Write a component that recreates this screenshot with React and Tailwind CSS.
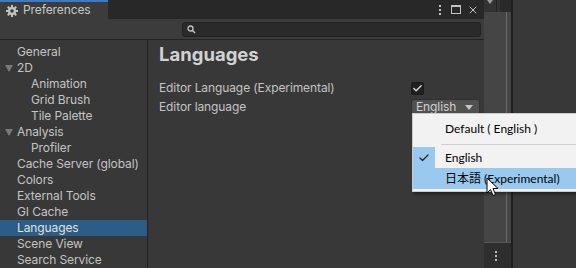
import { Check, X } from 'lucide-react'

const items = [
  { label: 'General', level: 0 },
  { label: '2D', level: 0, open: true },
  { label: 'Animation', level: 1 },
  { label: 'Grid Brush', level: 1 },
  { label: 'Tile Palette', level: 1 },
  { label: 'Analysis', level: 0, open: true },
  { label: 'Profiler', level: 1 },
  { label: 'Cache Server (global)', level: 0 },
  { label: 'Colors', level: 0 },
  { label: 'External Tools', level: 0 },
  { label: 'GI Cache', level: 0 },
  { label: 'Languages', level: 0, selected: true },
  { label: 'Scene View', level: 0 },
  { label: 'Search Service', level: 0 },
]

function Gear() {
  return (
    <svg width="12" height="12" viewBox="0 0 12 12" className="text-[#c4c4c4]">
      <g fill="currentColor">
        <circle cx="6" cy="6" r="4" />
        <rect x="5" y="0" width="2" height="12" />
        <rect x="0" y="5" width="12" height="2" />
        <rect x="5" y="0" width="2" height="12" transform="rotate(45 6 6)" />
        <rect x="5" y="0" width="2" height="12" transform="rotate(-45 6 6)" />
      </g>
      <circle cx="6" cy="6" r="1.8" fill="#3c3c3c" />
    </svg>
  )
}

function Cursor() {
  return (
    <svg width="14" height="20" viewBox="0 0 14 20">
      <path d="M1 1 L1 16 L4.5 12.5 L7 18.5 L9.5 17.5 L7 11.5 L12 11.5 Z" fill="#fff" stroke="#000" strokeWidth="1" strokeLinejoin="round" />
    </svg>
  )
}

export default function App() {
  return (
    <div className="relative w-[576px] h-[268px] overflow-hidden flex bg-[#383838] font-['Inter',sans-serif] text-[12px] tracking-[-0.1px] text-[#c4c4c4]">
      {/* Preferences window */}
      <div className="w-[484px] h-full flex flex-col bg-[#383838]">
        {/* Tab bar */}
        <div className="h-[19px] flex items-stretch bg-[#282828]">
          <div className="w-[108px] flex items-center gap-[5px] pl-[6px] bg-[#3c3c3c] border-t-2 border-[#3a7bc8]">
            <Gear />
            <span className="leading-none text-[#c8c8c8] -mt-[1px]">Preferences</span>
          </div>
          <div className="flex-1" />
          <div className="flex items-center pr-[5px] text-[#c4c4c4]">
            <div className="flex flex-col gap-[2px]">
              <div className="w-[2px] h-[2px] bg-[#c4c4c4]" />
              <div className="w-[2px] h-[2px] bg-[#c4c4c4]" />
              <div className="w-[2px] h-[2px] bg-[#c4c4c4]" />
            </div>
            <div className="w-[10px] h-[9px] border border-[#c4c4c4] border-t-2 ml-[10px]" />
            <X size={12} strokeWidth={2} className="ml-[6px]" />
          </div>
        </div>
        {/* Toolbar */}
        <div className="h-[21px] flex items-center bg-[#3c3c3c] border-b border-[#232323] pl-[182px] pr-[3px]">
          <div className="flex-1 h-[15px] rounded-[3px] bg-[#2a2a2a] border border-[#212121] flex items-center pl-[4px]">
            <svg width="9" height="9" viewBox="0 0 9 9">
              <circle cx="3.5" cy="3.5" r="2.5" fill="none" stroke="#c4c4c4" strokeWidth="1.3" />
              <path d="M5.5 5.5 L8 8" stroke="#c4c4c4" strokeWidth="1.6" />
            </svg>
          </div>
        </div>
        {/* Body */}
        <div className="flex-1 flex min-h-0">
          <div className="w-[148px] border-r border-[#232323] pt-[4px]">
            {items.map((it) => (
              <div
                key={it.label}
                className={`h-[16px] flex items-center whitespace-nowrap ${it.selected ? 'bg-[#2c5d87] text-[#e0e0e0]' : ''}`}
              >
                <div className={`${it.level ? 'w-[31px]' : 'w-[17px]'} flex justify-start pl-[5px] shrink-0`}>
                  {it.open && (
                    <svg width="8" height="7" viewBox="0 0 8 7">
                      <path d="M0 0 H8 L4 7 Z" fill="#7a7a7a" />
                    </svg>
                  )}
                </div>
                <span className="leading-none">{it.label}</span>
              </div>
            ))}
          </div>
          <div className="flex-1 pl-[11px] pt-[3px]">
            <div className="h-[22px] flex items-center text-[18.5px] font-bold tracking-normal text-[#d2d2d2] leading-none">Languages</div>
            <div className="mt-[15px] h-[16px] flex items-center">
              <span className="w-[252px] leading-none">Editor Language (Experimental)</span>
              <div className="w-[13px] h-[13px] rounded-[2px] bg-[#202020] border border-[#1a1a1a] flex items-center justify-center">
                <Check size={11} strokeWidth={3} className="text-[#d8d8d8]" />
              </div>
            </div>
            <div className="mt-[3px] h-[16px] flex items-center">
              <span className="w-[252px] leading-none">Editor language</span>
              <div className="w-[69px] h-[16px] rounded-[3px] bg-[#515151] border border-[#303030] flex items-center justify-between pl-[4px] pr-[6px] text-[#d2d2d2]">
                <span className="leading-none">English</span>
                <svg width="8" height="5" viewBox="0 0 8 5">
                  <path d="M0 0 H8 L4 5 Z" fill="#c4c4c4" />
                </svg>
              </div>
            </div>
          </div>
        </div>
      </div>

      {/* Neighbouring panel strip */}
      <div className="w-[27px] h-full flex flex-col bg-[#454545]">
        <div className="h-[12px] flex bg-[#333333]">
          <div className="w-[13px] flex items-start justify-center border-r border-[#222]">
            <svg width="6" height="4" viewBox="0 0 6 4"><path d="M0 0 H6 L3 4 Z" fill="#9a9a9a" /></svg>
          </div>
          <div className="flex-1 rounded-bl-[4px] bg-[#2a2a2a] ml-[3px]" />
        </div>
        <div className="flex-1 flex">
          <div className="flex-1" />
          <div className="w-[1px] bg-[#6a6a6a]" />
          <div className="w-[4px]" />
        </div>
        <div className="h-[26px] bg-[#2e2e2e] border-t border-[#555] flex flex-col items-center justify-center gap-[2px] pr-[4px]">
          <div className="w-[2px] h-[2px] bg-[#bdbdbd]" />
          <div className="w-[2px] h-[2px] bg-[#bdbdbd]" />
          <div className="w-[2px] h-[2px] bg-[#bdbdbd]" />
        </div>
      </div>
      <div className="w-[2px] h-full bg-[#1f1f1f]" />
      <div className="flex-1 h-full bg-[#383838]" />

      {/* Popup menu */}
      <div className="absolute left-[412px] top-[113px] w-[180px] bg-[#f2f2f2] border border-[#cccccc] shadow-[2px_2px_3px_rgba(0,0,0,0.45)] py-[2px] font-['Lato','Noto_Sans_CJK_JP',sans-serif] text-[12px] tracking-normal text-[#000]">
        <div className="h-[26px] flex items-center">
          <div className="w-[22px]" />
          <span className="pl-[10px] leading-none">Default ( English )</span>
        </div>
        <div className="h-[5px] flex items-center pl-[28px]">
          <div className="flex-1 h-[1px] bg-[#d0d0d0]" />
        </div>
        <div className="h-[21px] flex items-center">
          <div className="w-[22px] h-full bg-[#99c9ef] flex items-center justify-center">
            <Check size={12} strokeWidth={2.5} className="text-[#222]" />
          </div>
          <span className="pl-[10px] leading-none">English</span>
        </div>
        <div className="h-[21px] flex items-center bg-[#99c9ef]">
          <div className="w-[22px]" />
          <span className="pl-[10px] leading-none">日本語 (Experimental)</span>
        </div>
      </div>

      {/* Mouse cursor */}
      <div className="absolute left-[486px] top-[177px]">
        <Cursor />
      </div>
    </div>
  )
}
